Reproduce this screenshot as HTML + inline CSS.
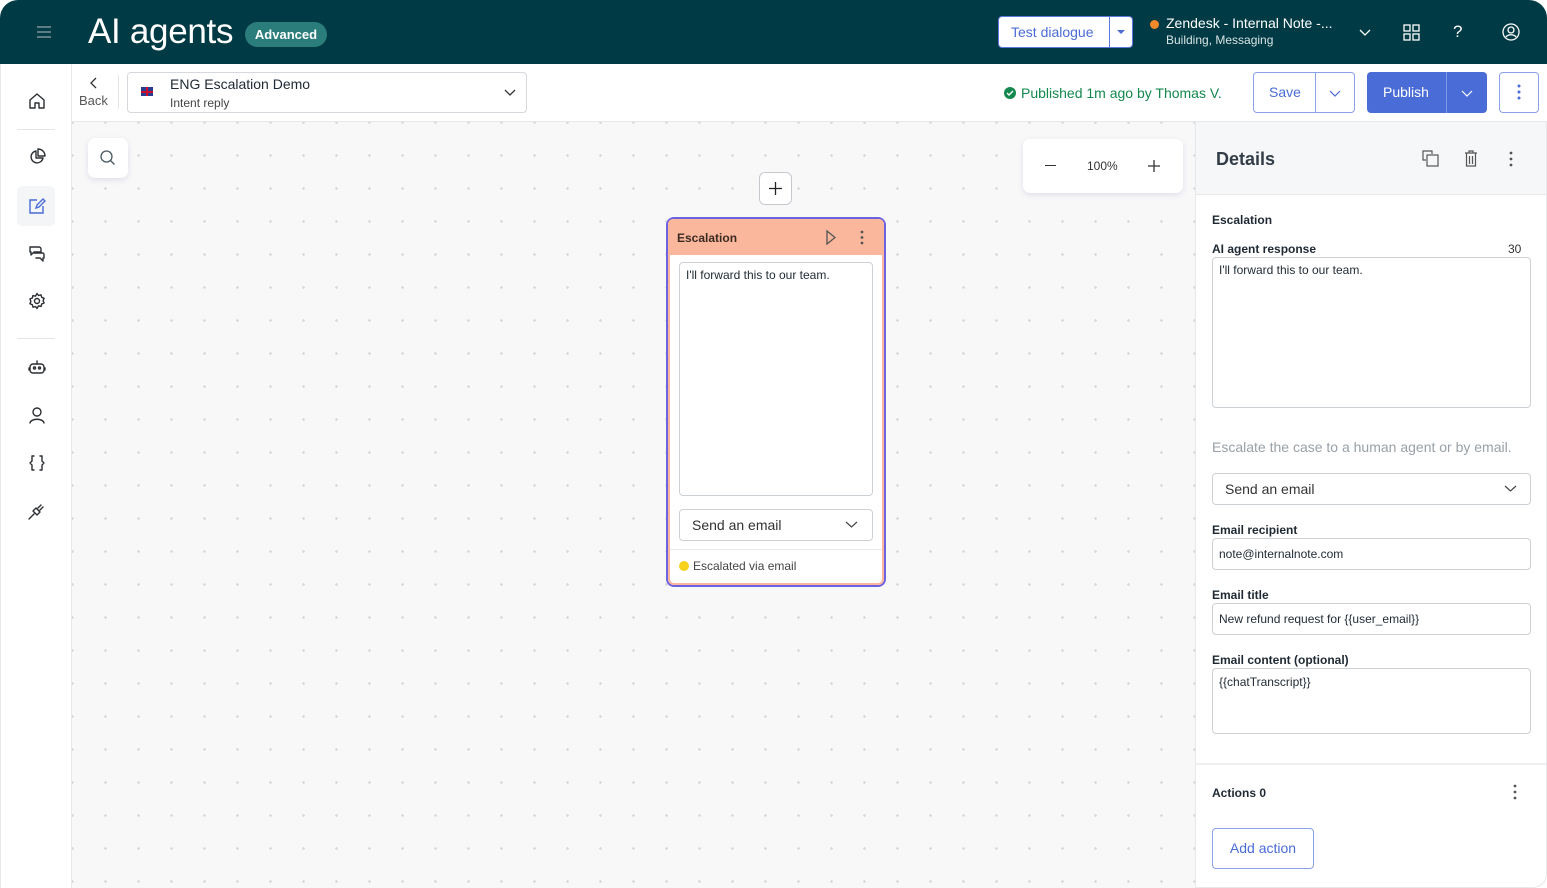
<!DOCTYPE html>
<html><head><meta charset="utf-8"><style>
*{box-sizing:border-box;margin:0;padding:0}
body{width:1547px;height:888px;overflow:hidden;font-family:"Liberation Sans",sans-serif;background:#fff;position:relative;color:#1f2933}
.abs{position:absolute}
.top{left:0;top:0;width:1547px;height:64px;background:#003a44;border-radius:18px 18px 0 0}
.canvas{left:72px;top:122px;width:1123px;height:766px;background-color:#f8f8f9;background-image:radial-gradient(circle,#d4d6da 1.2px,transparent 1.4px);background-size:33px 33px;background-position:-16px -16px}
svg{display:block}
.ic{stroke:#2b2f33;fill:none;stroke-width:1.4;stroke-linecap:round;stroke-linejoin:round}
.lbl{font-size:12px;font-weight:bold;color:#1f2933}
.inp{border:1px solid #ccd1d6;border-radius:4px;background:#fff;font-size:12px;color:#1f2933;padding:0 6px}
</style></head><body>
<div class="abs top"></div>
<svg class="abs" style="left:36px;top:26px" width="16" height="12"><path d="M1 1h14M1 6h14M1 11h14" stroke="#8fa6aa" stroke-width="1.3"/></svg>
<div class="abs" style="left:88px;top:12px;font-size:35px;color:#fff;letter-spacing:-0.3px">AI agents</div>
<div class="abs" style="left:245px;top:22px;width:82px;height:25px;border-radius:13px;background:#2a7d7a;color:#fff;font-size:13px;font-weight:bold;text-align:center;line-height:25px">Advanced</div>
<div class="abs" style="left:998px;top:16px;width:135px;height:32px;background:#fff;border:1px solid #5a78e0;border-radius:4px"></div>
<div class="abs" style="left:1011px;top:24px;font-size:14px;color:#4a6cd6">Test dialogue</div>
<div class="abs" style="left:1109px;top:17px;width:1px;height:30px;background:#5a78e0"></div>
<svg class="abs" style="left:1117px;top:30px" width="10" height="5"><path d="M0 0h8l-4 4z" fill="#4a6cd6"/></svg>
<div class="abs" style="left:1150px;top:20px;width:9px;height:9px;border-radius:50%;background:#f28a2a"></div>
<div class="abs" style="left:1166px;top:15px;font-size:14px;color:#fff">Zendesk - Internal Note -...</div>
<div class="abs" style="left:1166px;top:33px;font-size:12px;color:#d9e4e5">Building, Messaging</div>
<svg class="abs" style="left:1359px;top:29px" width="12" height="7"><path d="M1 1l5 5 5-5" stroke="#fff" fill="none" stroke-width="1.3"/></svg>
<svg class="abs" style="left:1403px;top:24px" width="17" height="17"><g stroke="#fff" fill="none" stroke-width="1.3"><rect x="1" y="1" width="6" height="6"/><rect x="10" y="1" width="6" height="6"/><rect x="1" y="10" width="6" height="6"/><rect x="10" y="10" width="6" height="6"/></g></svg>
<div class="abs" style="left:1453px;top:22px;font-size:17px;color:#fff">?</div>
<svg class="abs" style="left:1502px;top:23px" width="18" height="18"><g stroke="#fff" fill="none" stroke-width="1.3"><circle cx="9" cy="9" r="8"/><circle cx="9" cy="7" r="3"/><path d="M4 14c2-3 8-3 10 0"/></g></svg>

<!-- sidebar -->
<div class="abs" style="left:0;top:64px;width:72px;height:824px;background:#fff;border-right:1px solid #e6e8ea;border-left:1px solid #e6e8ea"></div>
<svg class="abs ic" style="left:28px;top:92px" width="18" height="18"><path d="M2 8l7-6 7 6v8h-5v-5H7v5H2z"/></svg>
<div class="abs" style="left:17px;top:129px;width:38px;height:1px;background:#e3e5e8"></div>
<svg class="abs ic" style="left:28px;top:148px" width="18" height="18"><path d="M8 3a6 6 0 1 0 7 7H8z"/><path d="M10 1v7h7a7 7 0 0 0-7-7z"/></svg>
<div class="abs" style="left:17px;top:186px;width:38px;height:40px;background:#f3f5f7;border-radius:5px"></div>
<svg class="abs" style="left:28px;top:197px" width="18" height="18"><g stroke="#4a6cd6" fill="none" stroke-width="1.4"><path d="M9 3H2v13h13V9"/><path d="M8 11l1-3 6-6 2 2-6 6z"/></g></svg>
<svg class="abs ic" style="left:28px;top:244px" width="18" height="18"><path d="M2 3h9a2 2 0 0 1 2 2v3H6L3 11V8H2z"/><path d="M6 9h9a2 2 0 0 1 1 2v3h-1v3l-3-3H8"/></svg>
<svg class="abs ic" style="left:28px;top:292px" width="18" height="18"><circle cx="9" cy="9" r="2.5"/><path d="M9 1.5l1.5 2 2.5-.7.7 2.5 2.4 1-1 2.4 1 2.3-2.4 1-.7 2.5-2.5-.7L9 16.5l-1.5-2-2.5.7-.7-2.5-2.4-1 1-2.3-1-2.4 2.4-1 .7-2.5 2.5.7z"/></svg>
<div class="abs" style="left:17px;top:338px;width:38px;height:1px;background:#e3e5e8"></div>
<svg class="abs ic" style="left:28px;top:359px" width="18" height="16"><rect x="2" y="5" width="14" height="9" rx="3"/><path d="M9 2v3M1 9v2M17 9v2"/><circle cx="6.5" cy="9" r="1"/><circle cx="11.5" cy="9" r="1"/></svg>
<svg class="abs ic" style="left:28px;top:406px" width="18" height="18"><circle cx="9" cy="6" r="4"/><path d="M2 17c1-5 13-5 14 0"/></svg>
<svg class="abs ic" style="left:28px;top:454px" width="18" height="18"><path d="M6 2H4v5l-2 2 2 2v5h2M12 2h2v5l2 2-2 2v5h-2"/></svg>
<svg class="abs ic" style="left:28px;top:502px" width="18" height="18"><path d="M1 17l5-5M5 9l4 4 3-3-4-4zM10 6l3-3M12 8l3-3"/></svg>

<!-- toolbar -->
<div class="abs" style="left:72px;top:64px;width:1475px;height:58px;background:#fff;border-bottom:1px solid #e6e8ea"></div>
<svg class="abs" style="left:90px;top:77px" width="8" height="12"><path d="M6 1L1 6l5 5" stroke="#333" fill="none" stroke-width="1.3"/></svg>
<div class="abs" style="left:79px;top:93px;font-size:13px;color:#555">Back</div>
<div class="abs" style="left:118px;top:75px;width:1px;height:34px;background:#e3e5e8"></div>
<div class="abs" style="left:127px;top:72px;width:400px;height:41px;border:1px solid #d5d9dd;border-radius:4px;background:#fff"></div>
<div class="abs" style="left:141px;top:87px;width:12px;height:9px;background:linear-gradient(#c8102e,#c8102e) center/12px 2px no-repeat,linear-gradient(#c8102e,#c8102e) center/2px 9px no-repeat,#2a3c8f"></div>
<div class="abs" style="left:170px;top:76px;font-size:14px;color:#1f2933">ENG Escalation Demo</div>
<div class="abs" style="left:170px;top:96px;font-size:12px;color:#444">Intent reply</div>
<svg class="abs" style="left:504px;top:89px" width="12" height="7"><path d="M1 1l5 5 5-5" stroke="#333" fill="none" stroke-width="1.3"/></svg>
<svg class="abs" style="left:1004px;top:87px" width="12" height="12"><circle cx="6" cy="6" r="6" fill="#14884f"/><path d="M3 6l2 2 4-4" stroke="#fff" fill="none" stroke-width="1.4"/></svg>
<div class="abs" style="left:1021px;top:85px;font-size:14px;color:#14884f">Published 1m ago by Thomas V.</div>
<div class="abs" style="left:1253px;top:72px;width:102px;height:41px;border:1px solid #8aa1ea;border-radius:4px;background:#fff"></div>
<div class="abs" style="left:1315px;top:73px;width:1px;height:39px;background:#8aa1ea"></div>
<div class="abs" style="left:1269px;top:84px;font-size:14px;color:#4a6cd6">Save</div>
<svg class="abs" style="left:1329px;top:90px" width="12" height="7"><path d="M1 1l5 5 5-5" stroke="#4a6cd6" fill="none" stroke-width="1.2"/></svg>
<div class="abs" style="left:1367px;top:72px;width:120px;height:41px;border-radius:4px;background:#4a6cd6"></div>
<div class="abs" style="left:1446px;top:72px;width:1px;height:41px;background:#7f98e6"></div>
<div class="abs" style="left:1383px;top:84px;font-size:14px;color:#fff">Publish</div>
<svg class="abs" style="left:1461px;top:90px" width="12" height="7"><path d="M1 1l5 5 5-5" stroke="#fff" fill="none" stroke-width="1.2"/></svg>
<div class="abs" style="left:1499px;top:72px;width:40px;height:41px;border:1px solid #8aa1ea;border-radius:4px;background:#fff"></div>
<svg class="abs" style="left:1516px;top:84px" width="6" height="17"><g fill="#4a6cd6"><circle cx="3" cy="2" r="1.5"/><circle cx="3" cy="8" r="1.5"/><circle cx="3" cy="14" r="1.5"/></g></svg>

<!-- canvas -->
<div class="abs canvas"></div>
<div class="abs" style="left:88px;top:138px;width:40px;height:40px;background:#fff;border-radius:7px;box-shadow:0 2px 6px rgba(80,80,160,.15)"></div>
<svg class="abs" style="left:99px;top:149px" width="18" height="18"><circle cx="7.5" cy="7.5" r="5.5" stroke="#4b5a63" fill="none" stroke-width="1.3"/><path d="M11.5 11.5l4 4" stroke="#4b5a63" stroke-width="1.3"/></svg>
<div class="abs" style="left:1023px;top:139px;width:160px;height:54px;background:#fff;border-radius:7px;box-shadow:0 2px 6px rgba(80,80,160,.15)"></div>
<div class="abs" style="left:1045px;top:165px;width:11px;height:1.3px;background:#333"></div>
<div class="abs" style="left:1087px;top:159px;font-size:12px;color:#333">100%</div>
<svg class="abs" style="left:1147px;top:159px" width="14" height="14"><path d="M7 1v12M1 7h12" stroke="#333" stroke-width="1.3"/></svg>
<div class="abs" style="left:759px;top:172px;width:33px;height:33px;background:#fff;border:1.5px solid #c5c9ce;border-radius:6px"></div>
<svg class="abs" style="left:768px;top:181px" width="15" height="15"><path d="M7.5 1v13M1 7.5h13" stroke="#222" stroke-width="1.3"/></svg>

<!-- node -->
<div class="abs" style="left:666px;top:217px;width:220px;height:370px;border:2px solid #6b63e0;border-radius:8px;background:#fff"></div>
<div class="abs" style="left:668px;top:219px;width:216px;height:366px;border:2px solid #fbb79c;border-radius:6px"></div>
<div class="abs" style="left:668px;top:219px;width:216px;height:36px;background:#fbb79c;border-radius:5px 5px 0 0"></div>
<div class="abs" style="left:677px;top:231px;font-size:12px;font-weight:bold;color:#3a2a22">Escalation</div>
<svg class="abs" style="left:825px;top:229px" width="12" height="17"><path d="M2 2l8 6.5L2 15z" stroke="#555" fill="none" stroke-width="1.3"/></svg>
<svg class="abs" style="left:859px;top:229px" width="6" height="17"><g fill="#555"><circle cx="3" cy="3" r="1.4"/><circle cx="3" cy="8.5" r="1.4"/><circle cx="3" cy="14" r="1.4"/></g></svg>
<div class="abs inp" style="left:679px;top:262px;width:194px;height:234px;padding-top:5px">I'll forward this to our team.</div>
<div class="abs inp" style="left:679px;top:509px;width:194px;height:32px;font-size:14px;line-height:30px;padding-left:12px;color:#333">Send an email</div>
<svg class="abs" style="left:845px;top:521px" width="13" height="7"><path d="M1 1l5.5 5 5.5-5" stroke="#444" fill="none" stroke-width="1.2"/></svg>
<div class="abs" style="left:670px;top:549px;width:212px;height:1px;background:#e6e8ea"></div>
<div class="abs" style="left:679px;top:561px;width:10px;height:10px;border-radius:50%;background:#f7d21e"></div>
<div class="abs" style="left:693px;top:559px;font-size:12px;color:#444">Escalated via email</div>

<!-- details panel -->
<div class="abs" style="left:1195px;top:122px;width:352px;height:766px;background:#fff;border-left:1px solid #e6e8ea;border-right:1px solid #e6e8ea;border-bottom:1px solid #e6e8ea;border-radius:0 0 14px 0"></div>
<div class="abs" style="left:1196px;top:122px;width:350px;height:73px;background:#f6f7f8;border-bottom:1px solid #e6e8ea"></div>
<div class="abs" style="left:1216px;top:149px;font-size:18px;font-weight:bold;color:#333d47">Details</div>
<svg class="abs" style="left:1422px;top:150px" width="18" height="18"><g stroke="#555" fill="none" stroke-width="1.2"><path d="M4 10H1V1h9v3"/><rect x="5" y="5" width="11" height="11"/></g></svg>
<svg class="abs" style="left:1464px;top:150px" width="14" height="17"><g stroke="#555" fill="none" stroke-width="1.2"><path d="M1 3h12M5 3V1h4v2M2.5 3v13h9V3M5.5 6v8M8.5 6v8"/></g></svg>
<svg class="abs" style="left:1508px;top:151px" width="6" height="17"><g fill="#555"><circle cx="3" cy="2" r="1.4"/><circle cx="3" cy="8" r="1.4"/><circle cx="3" cy="14" r="1.4"/></g></svg>
<div class="abs lbl" style="left:1212px;top:213px">Escalation</div>
<div class="abs lbl" style="left:1212px;top:242px">AI agent response</div>
<div class="abs" style="left:1508px;top:242px;font-size:12px;color:#333">30</div>
<div class="abs inp" style="left:1212px;top:257px;width:319px;height:151px;padding-top:5px">I'll forward this to our team.</div>
<div class="abs" style="left:1212px;top:439px;font-size:14px;color:#99a0a8">Escalate the case to a human agent or by email.</div>
<div class="abs inp" style="left:1212px;top:473px;width:319px;height:32px;font-size:14px;line-height:30px;padding-left:12px;color:#333">Send an email</div>
<svg class="abs" style="left:1504px;top:485px" width="13" height="7"><path d="M1 1l5.5 5 5.5-5" stroke="#444" fill="none" stroke-width="1.2"/></svg>
<div class="abs lbl" style="left:1212px;top:523px">Email recipient</div>
<div class="abs inp" style="left:1212px;top:538px;width:319px;height:32px;line-height:30px">note@internalnote.com</div>
<div class="abs lbl" style="left:1212px;top:588px">Email title</div>
<div class="abs inp" style="left:1212px;top:603px;width:319px;height:32px;line-height:30px">New refund request for {{user_email}}</div>
<div class="abs lbl" style="left:1212px;top:653px">Email content (optional)</div>
<div class="abs inp" style="left:1212px;top:668px;width:319px;height:66px;padding-top:6px">{{chatTranscript}}</div>
<div class="abs" style="left:1196px;top:763px;width:350px;height:2px;background:#eef0f2"></div>
<div class="abs lbl" style="left:1212px;top:786px">Actions 0</div>
<svg class="abs" style="left:1512px;top:784px" width="6" height="17"><g fill="#555"><circle cx="3" cy="2" r="1.4"/><circle cx="3" cy="8" r="1.4"/><circle cx="3" cy="14" r="1.4"/></g></svg>
<div class="abs" style="left:1212px;top:828px;width:102px;height:41px;border:1px solid #8aa1ea;border-radius:4px;background:#fff;color:#4a6cd6;font-size:14px;text-align:center;line-height:39px">Add action</div>
</body></html>
